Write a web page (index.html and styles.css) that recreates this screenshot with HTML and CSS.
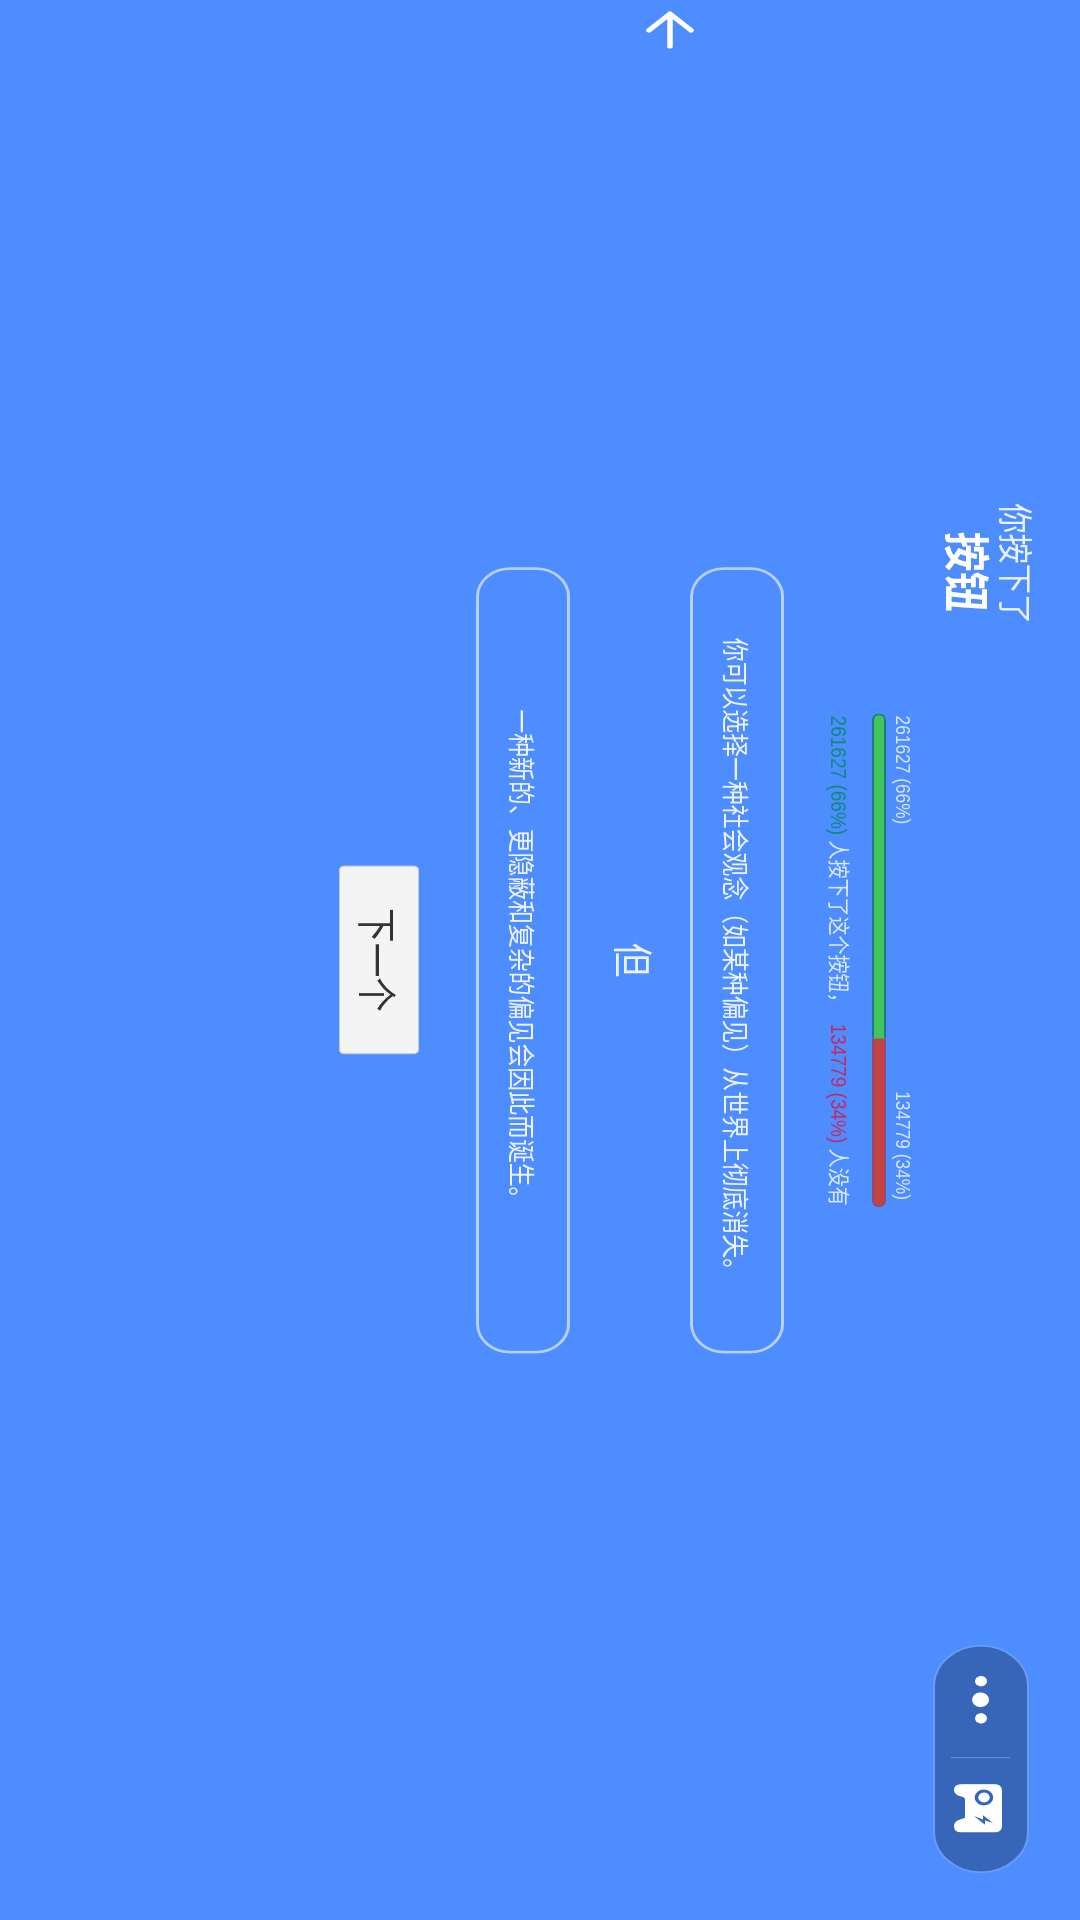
FILE: index.html
```html
<!DOCTYPE html>
<html lang="zh">
<head>
<meta charset="utf-8">
<title>按钮</title>
<link rel="stylesheet" href="styles.css">
</head>
<body>
<div class="screen">
<main class="stage">
  <a class="back" aria-label="返回">
    <svg viewBox="0 0 44 52" width="44" height="52"><path d="M42 26H4M23 5L4 26L23 47" fill="none" stroke="#fff" stroke-width="5.5" stroke-linecap="round" stroke-linejoin="round"/></svg>
  </a>
  <header class="title">
    <div class="title-sub">你按下了</div>
    <div class="title-main">按钮</div>
  </header>
  <section class="stats">
    <div class="bar-labels"><span>261627 (66%)</span><span>134779 (34%)</span></div>
    <div class="bar"><div class="bar-yes"></div><div class="bar-no"></div></div>
    <div class="summary"><span class="yes">261627 (66%)</span> 人按下了这个按钮，<span class="no">134779 (34%)</span> 人没有</div>
  </section>
  <div class="card">你可以选择一种社会观念（如某种偏见）从世界上彻底消失。</div>
  <div class="but">但</div>
  <div class="card">一种新的、更隐蔽和复杂的偏见会因此而诞生。</div>
  <button class="next">下一个</button>
  <aside class="pill">
    <div class="dots"><i class="dot"></i><i class="dot dot-big"></i><i class="dot"></i></div>
    <div class="sep"></div>
    <svg class="logo" viewBox="0 0 56 48" width="56" height="48">
      <path d="M8 0H48Q56 0 56 8V40Q56 48 49 48Q43 48 41 42L39 37H18Q15 37 14 42Q12 48 6 48Q0 47 0 40V8Q0 0 8 0Z" fill="#fff"/>
      <circle cx="15.5" cy="18" r="7.5" fill="none" stroke="#3766b8" stroke-width="3.5"/>
      <path d="M45 9L36 19H41L37 28L47 17H42Z" fill="#3766b8"/>
    </svg>
  </aside>
</main>
</div>
</body>
</html>
```
FILE: styles.css
```css
html, body {
  margin: 0;
  padding: 0;
  background: #4d8dff;
}
.screen {
  width: 1080px;
  height: 1920px;
  overflow: hidden;
}
.stage {
  position: relative;
  box-sizing: border-box;
  width: 2220px;
  height: 1080px;
  padding-top: 44px;
  display: flex;
  flex-direction: column;
  align-items: center;
  background: #4d8dff;
  color: #e2ecff;
  font-family: "Noto Sans CJK SC", "Noto Sans", sans-serif;
  transform-origin: 0 0;
  transform: translateX(1080px) rotate(90deg) scaleX(0.8648);
  filter: blur(0.7px);
}
.back {
  position: absolute;
  left: 12px;
  top: 384px;
  line-height: 0;
}
.title {
  align-self: flex-start;
  margin-left: 582px;
  width: 140px;
  text-align: center;
  color: #fff;
}
.title-sub {
  font-size: 35px;
  line-height: 38px;
  color: #eaf1ff;
}
.title-main {
  font-size: 46px;
  line-height: 56px;
  font-weight: 700;
  margin-left: 18px;
}
.stats {
  width: 571px;
  margin-top: 26px;
  font-family: "Liberation Sans", "Noto Sans CJK SC", sans-serif;
}
.bar-labels {
  display: flex;
  justify-content: space-between;
  padding: 0 8px 0 3px;
  font-size: 20px;
  line-height: 26px;
  color: #d6e4ff;
}
.bar {
  display: flex;
  height: 14px;
  margin-top: 4px;
  border-radius: 7px;
  overflow: hidden;
}
.bar-yes {
  width: 66%;
  box-sizing: border-box;
  background: #41c45c;
  border: 2px solid #1f7a84;
  border-right: 0;
  border-radius: 7px 0 0 7px;
}
.bar-no {
  flex: 1;
  box-sizing: border-box;
  background: #c2433f;
  border: 2px solid #8c4a78;
  border-left: 0;
  border-radius: 0 7px 7px 0;
}
.summary {
  margin-top: 20px;
  padding-left: 3px;
  font-size: 22px;
  line-height: 28px;
  color: #dce8ff;
  white-space: nowrap;
}
.yes { color: #0f8a78; }
.no { color: #c42a62; margin-left: 14px; }
.card {
  box-sizing: border-box;
  width: 909px;
  height: 94px;
  margin-top: 40px;
  border: 3px solid #b9d0fc;
  border-radius: 34px;
  display: flex;
  align-items: center;
  justify-content: center;
  font-size: 27.6px;
  color: #eef3ff;
}
.but {
  font-size: 40px;
  line-height: 56px;
  margin-top: 27px;
  color: #eef4ff;
}
.but + .card { margin-top: 37px; }
.next {
  width: 218px;
  height: 80px;
  margin-top: 57px;
  padding: 0;
  background: #f5f4f4;
  border: 1px solid #c8ccd6;
  border-radius: 5px;
  color: #333;
  font-family: "Noto Sans CJK SC", sans-serif;
  font-size: 40px;
}
.pill {
  position: absolute;
  right: 54px;
  top: 51px;
  box-sizing: border-box;
  width: 264px;
  height: 96px;
  display: flex;
  align-items: center;
  background: #3766b8;
  border: 2px solid #6a9cf6;
  border-radius: 48px;
}
.dots {
  display: flex;
  align-items: center;
  gap: 7px;
  margin-left: 34px;
  width: 72px;
}
.dot {
  width: 12px;
  height: 12px;
  border-radius: 50%;
  background: #fff;
}
.dot-big {
  width: 17px;
  height: 17px;
}
.sep {
  width: 1px;
  height: 59px;
  margin-left: 22px;
  background: #6a9cf6;
}
.logo {
  margin-left: 30px;
  margin-top: 6px;
}
```
